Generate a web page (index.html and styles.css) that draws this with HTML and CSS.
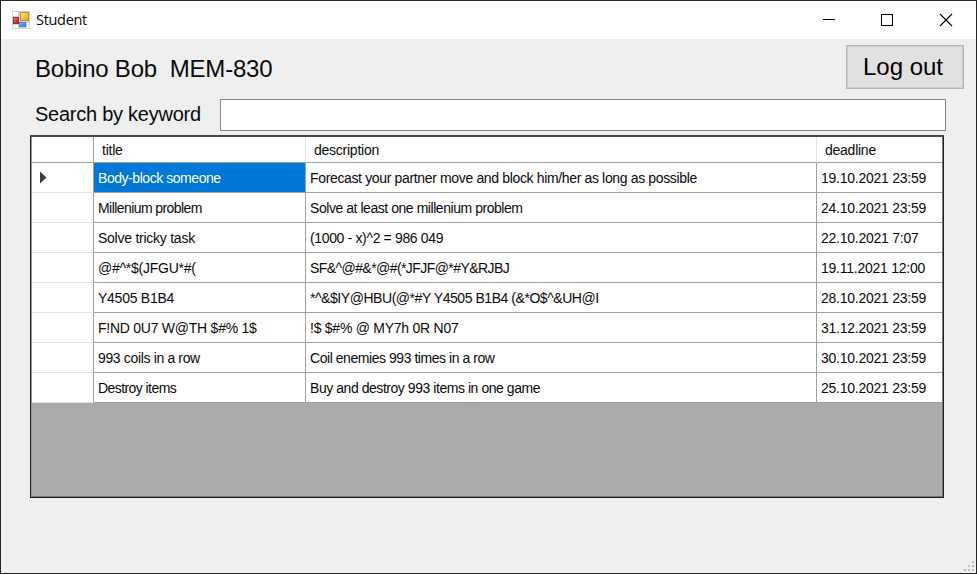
FILE: index.html
```html
<!DOCTYPE html>
<html lang="en">
<head>
<meta charset="utf-8">
<title>Student</title>
<link rel="stylesheet" href="styles.css">
</head>
<body>
<div class="window">
  <header class="titlebar">
    <svg class="app-icon" width="18" height="18" viewBox="0 0 18 18">
      <defs>
        <linearGradient id="gold" x1="0" y1="0" x2="1" y2="1"><stop offset="0" stop-color="#ffe79a"/><stop offset="1" stop-color="#e0a000"/></linearGradient>
        <linearGradient id="red" x1="0" y1="0" x2="1" y2="1"><stop offset="0" stop-color="#e58a83"/><stop offset="1" stop-color="#a80f0f"/></linearGradient>
        <linearGradient id="blue" x1="0" y1="0" x2="1" y2="1"><stop offset="0" stop-color="#8fbcff"/><stop offset="1" stop-color="#2c6be0"/></linearGradient>
      </defs>
      <rect width="18" height="18" rx="1" fill="#d2d2d2"/>
      <path d="M1 1h5v4H1zM1 14h5v3H1zM15 12h2v5h-2z" fill="#fff"/>
      <rect x="1.5" y="6.5" width="5" height="6" fill="url(#red)" stroke="#b02a24"/>
      <rect x="8.5" y="1.5" width="8" height="8" fill="url(#gold)" stroke="#c99516"/>
      <rect x="7.5" y="11.500" width="6" height="4" fill="url(#blue)" stroke="#4a82dd"/>
    </svg>
    <span class="caption">Student</span>
    <div class="controls">
      <svg width="58" height="38" viewBox="0 0 58 38"><path d="M17 18.500h12" stroke="#000"/></svg>
      <svg width="59" height="38" viewBox="0 0 59 38"><rect x="17.500" y="13.500" width="11" height="11" fill="none" stroke="#000"/></svg>
      <svg width="53" height="38" viewBox="0 0 53 38"><path d="M17 13l12 12M29 13l-12 12" stroke="#000" stroke-width="1.100"/></svg>
    </div>
  </header>
  <main class="form">
    <div class="top-row">
      <div class="user">Bobino Bob&nbsp; MEM-830</div>
      <button class="logout"><span>Log out</span></button>
    </div>
    <div class="search-row">
      <label class="search-label" for="keyword">Search by keyword</label>
      <input class="search" id="keyword" type="text">
    </div>
    <div class="grid-view">
      <div class="row head"><div></div><div><span>title</span></div><div><span>description</span></div><div><span>deadline</span></div></div>
      <div class="row"><div class="marker"><svg width="7" height="13" viewBox="0 0 7 13"><path d="M0 0.500L6.500 6.500L0 12.500z" fill="#404040"/></svg></div><div class="selected tight"><span>Body-block someone</span></div><div class="snug"><span>Forecast your partner move and block him/her as long as possible</span></div><div class="date"><span>19.10.2021 23:59</span></div></div>
      <div class="row"><div></div><div class="tightest"><span>Millenium problem</span></div><div class="tight"><span>Solve at least one millenium problem</span></div><div class="date"><span>24.10.2021 23:59</span></div></div>
      <div class="row"><div></div><div><span>Solve tricky task</span></div><div class="snug"><span>(1000 - x)^2 = 986 049</span></div><div class="date"><span>22.10.2021 7:07</span></div></div>
      <div class="row"><div></div><div><span>@#^*$(JFGU*#(</span></div><div class="tightest"><span>SF&amp;^@#&amp;*@#(*JFJF@*#Y&amp;RJBJ</span></div><div class="date"><span>19.11.2021 12:00</span></div></div>
      <div class="row"><div></div><div><span>Y4505 B1B4</span></div><div class="tight"><span>*^&amp;$IY@HBU(@*#Y Y4505 B1B4 (&amp;*O$^&amp;UH@I</span></div><div class="date"><span>28.10.2021 23:59</span></div></div>
      <div class="row"><div></div><div><span>F!ND 0U7 W@TH $#% 1$</span></div><div><span>!$ $#% @ MY7h 0R N07</span></div><div class="date"><span>31.12.2021 23:59</span></div></div>
      <div class="row"><div></div><div class="snug"><span>993 coils in a row</span></div><div class="tight"><span>Coil enemies 993 times in a row</span></div><div class="date"><span>30.10.2021 23:59</span></div></div>
      <div class="row"><div></div><div class="tightest"><span>Destroy items</span></div><div class="tight"><span>Buy and destroy 993 items in one game</span></div><div class="date"><span>25.10.2021 23:59</span></div></div>
    </div>
    <svg class="grip" width="11" height="11" viewBox="0 0 11 11"><path d="M8 0h2v2h-2zM4 4h2v2h-2zM8 4h2v2h-2zM0 8h2v2h-2zM4 8h2v2h-2zM8 8h2v2h-2z" fill="#bfbfbf"/></svg>
  </main>
</div>
</body>
</html>
```
FILE: styles.css
```css
* { box-sizing: border-box; }
body { margin: 0; font-family: "Liberation Sans", Arial, sans-serif; color: #0a0a0a; }
.window { position: relative; width: 977px; height: 574px; border: 1px solid #242424; background: #efefef; overflow: hidden; }
.titlebar { display: flex; align-items: center; height: 38px; padding-left: 11px; background: #fff; }
.caption { margin: -2px 0 0 6px; font: 14.5px "Open Sans", "Noto Sans", sans-serif; letter-spacing: -.3px; }
.controls { display: flex; margin-left: auto; }
.controls svg { display: block; }
.top-row { display: flex; justify-content: space-between; padding: 6px 12px 0 34px; height: 60px; }
.user { padding-top: 9px; font-size: 24px; line-height: 29px; letter-spacing: -.22px; white-space: nowrap; }
.logout { width: 118px; height: 44px; padding: 0 4px 0 0; border: 1px solid #b5b5b5; box-shadow: inset 0 0 0 1px #cbcbcb; background: #e1e1e1; font: 24px "Liberation Sans", sans-serif; }
.search-row { display: flex; height: 36px; padding-left: 34px; }
.search-label { width: 185px; padding-top: 3px; font-size: 20px; line-height: 24px; letter-spacing: -.25px; white-space: nowrap; }
.search { width: 726px; height: 32px; padding: 0 6px; border: 1px solid #858585; background: #fff; font-size: 20px; outline: none; }
.grid-view { width: 914px; height: 363px; margin-left: 29px; padding: 0 1px; border: 1px solid #202020; border-top: 2px solid #484848; box-shadow: inset 1px 0 #999, inset -1px -1px #777; background: #ababab; }
.row { display: grid; grid-template-columns: 62px 211px 512px 125px; height: 30px; font-size: 14px; letter-spacing: -.25px; line-height: 30px; white-space: nowrap; }
.row > div { height: 30px; border-right: 1px solid #a0a0a0; border-bottom: 1px solid #a0a0a0; background: #fff; padding-left: 4px; }
.row { grid-template-columns: 62px 212px 511px 125px; }
.row > div:first-child { border-bottom-color: #e3e3e3; }
.row > div:last-child { border-right: 0; }
.row.head { height: 26px; line-height: 26px; }
.row.head > div { height: 26px; border-right-color: #e3e3e3; border-bottom-color: #a0a0a0; padding-left: 8px; }
.row.head > div:first-child { border-right-color: #a0a0a0; }
.row > .snug { letter-spacing: -.35px; }
.row > .tight { letter-spacing: -.45px; }
.row > .tightest { letter-spacing: -.57px; }
.row > .selected { background: #0078d7; color: #fff; }
.row > .marker { display: flex; align-items: center; padding-left: 8px; }
.grip { position: absolute; right: 1px; bottom: 1px; }
```
